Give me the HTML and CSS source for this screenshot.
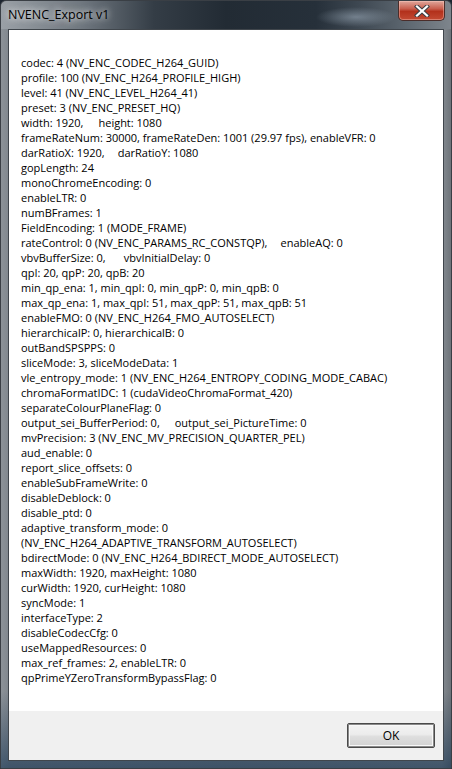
FILE: index.html
```html
<!DOCTYPE html>
<html>

<head>
    <meta charset="utf-8">
    <title>NVENC_Export v1</title>
    <link rel="stylesheet" href="styles.css">
</head>

<body>
    <div class="window">
        <div class="titlebar">
            <span class="title">NVENC_Export v1</span>
            <div class="close">
                <svg width="20" height="12" viewBox="0 0 20 12">
                    <path d="M5 1.5 L15 10.5 M15 1.5 L5 10.5" stroke="#3b3f44" stroke-width="4.2" stroke-linecap="square" />
                    <path d="M5 1.5 L15 10.5 M15 1.5 L5 10.5" stroke="#ffffff" stroke-width="2.2" stroke-linecap="square" />
                </svg>
            </div>
        </div>
        <div class="client">
            <div class="info">
<div>codec: 4 (NV_ENC_CODEC_H264_GUID)</div>
<div>profile: 100 (NV_ENC_H264_PROFILE_HIGH)</div>
<div>level: 41 (NV_ENC_LEVEL_H264_41)</div>
<div>preset: 3 (NV_ENC_PRESET_HQ)</div>
<div>width: 1920,<span class="tab t1"></span>height: 1080</div>
<div>frameRateNum: 30000, frameRateDen: 1001 (29.97 fps), enableVFR: 0</div>
<div>darRatioX: 1920,<span class="tab t2"></span>darRatioY: 1080</div>
<div>gopLength: 24</div>
<div>monoChromeEncoding: 0</div>
<div>enableLTR: 0</div>
<div>numBFrames: 1</div>
<div>FieldEncoding: 1 (MODE_FRAME)</div>
<div>rateControl: 0 (NV_ENC_PARAMS_RC_CONSTQP),<span class="tab t2"></span>enableAQ: 0</div>
<div>vbvBufferSize: 0,<span class="tab t3"></span>vbvInitialDelay: 0</div>
<div>qpI: 20, qpP: 20, qpB: 20</div>
<div>min_qp_ena: 1, min_qpI: 0, min_qpP: 0, min_qpB: 0</div>
<div>max_qp_ena: 1, max_qpI: 51, max_qpP: 51, max_qpB: 51</div>
<div>enableFMO: 0 (NV_ENC_H264_FMO_AUTOSELECT)</div>
<div>hierarchicalP: 0, hierarchicalB: 0</div>
<div>outBandSPSPPS: 0</div>
<div>sliceMode: 3, sliceModeData: 1</div>
<div>vle_entropy_mode: 1 (NV_ENC_H264_ENTROPY_CODING_MODE_CABAC)</div>
<div>chromaFormatIDC: 1 (cudaVideoChromaFormat_420)</div>
<div>separateColourPlaneFlag: 0</div>
<div>output_sei_BufferPeriod: 0,<span class="tab t1"></span>output_sei_PictureTime: 0</div>
<div>mvPrecision: 3 (NV_ENC_MV_PRECISION_QUARTER_PEL)</div>
<div>aud_enable: 0</div>
<div>report_slice_offsets: 0</div>
<div>enableSubFrameWrite: 0</div>
<div>disableDeblock: 0</div>
<div>disable_ptd: 0</div>
<div>adaptive_transform_mode: 0</div>
<div>(NV_ENC_H264_ADAPTIVE_TRANSFORM_AUTOSELECT)</div>
<div>bdirectMode: 0 (NV_ENC_H264_BDIRECT_MODE_AUTOSELECT)</div>
<div>maxWidth: 1920, maxHeight: 1080</div>
<div>curWidth: 1920, curHeight: 1080</div>
<div>syncMode: 1</div>
<div>interfaceType: 2</div>
<div>disableCodecCfg: 0</div>
<div>useMappedResources: 0</div>
<div>max_ref_frames: 2, enableLTR: 0</div>
<div>qpPrimeYZeroTransformBypassFlag: 0</div>
            </div>
            <div class="footer">
                <button class="ok">OK</button>
            </div>
        </div>
    </div>
</body>

</html>
```

FILE: styles.css
```css
html,
body {
    margin: 0;
    padding: 0;
    background: #1c2530;
}

body {
    font-family: "Open Sans", "Noto Sans", "DejaVu Sans", sans-serif;
    font-size: 11px;
    color: #000000;
}

.window {
    width: 452px;
    height: 769px;
    box-sizing: border-box;
    display: flex;
    flex-direction: column;
    padding: 0 7px 7px 7px;
    border: 1px solid #3a3f45;
    border-radius: 6px 6px 0 0;
    background:
        linear-gradient(180deg, rgba(255, 255, 255, 0) 0, rgba(255, 255, 255, 0) 90%, rgba(20, 50, 80, 0.6) 100%),
        linear-gradient(90deg, #8c9298 0, #7f868d 2%, #7b8288 50%, #858b91 98%, #6e747a 100%);
}

.titlebar {
    height: 28px;
    margin: 0 -7px;
    padding: 0 7px;
    display: flex;
    align-items: flex-start;
    justify-content: space-between;
    border-radius: 6px 6px 0 0;
    background:
        radial-gradient(ellipse 40px 10px at 355px 16px, rgba(160, 175, 190, 0.55), rgba(160, 175, 190, 0) 100%),
        linear-gradient(90deg, #9aa0a6 0, #6f777f 18%, #343d46 34%, #222b34 50%, #26303a 70%, #3f4953 80%, #5d6770 90%, #7e858c 100%);
}

.title {
    margin-top: 6px;
    font-family: "Open Sans", "Noto Sans", sans-serif;
    font-size: 12.5px;
    line-height: 16px;
    color: #000000;
    text-shadow: 0 0 6px rgba(255, 255, 255, 0.9), 0 0 10px rgba(255, 255, 255, 0.6);
}

.close {
    width: 47px;
    height: 20px;
    margin-right: -1px;
    box-sizing: border-box;
    display: flex;
    align-items: center;
    justify-content: center;
    border: 1px solid #4a2d2a;
    border-top: none;
    border-radius: 0 0 5px 5px;
    background: linear-gradient(180deg, #e0a79c 0, #c9604f 40%, #b3311c 55%, #c34a33 100%);
    box-shadow: inset 0 0 0 1px rgba(255, 210, 200, 0.4);
}

.close svg {
    display: block;
}

.client {
    flex: 1;
    display: flex;
    flex-direction: column;
    border: 1px solid #40464c;
    background: #f0f0f0;
}

.info {
    flex: 1;
    background: #ffffff;
    padding: 25px 0 0 12px;
    line-height: 15px;
    white-space: nowrap;
}

.tab {
    display: inline-block;
}

.t1 {
    width: 15px;
}

.t2 {
    width: 13px;
}

.t3 {
    width: 18px;
}

.footer {
    height: 49px;
    display: flex;
    align-items: flex-start;
    justify-content: flex-end;
    padding: 12px 8px 0 0;
    box-sizing: border-box;
}

.ok {
    width: 88px;
    height: 25px;
    margin: 0;
    padding: 0;
    font-family: "Open Sans", "Noto Sans", sans-serif;
    font-size: 12px;
    color: #000000;
    border: 1px solid #4a4a4a;
    border-radius: 2px;
    background: linear-gradient(180deg, #f4f4f4 0, #ececec 45%, #dedede 55%, #d2d2d2 100%);
    box-shadow: inset 0 0 0 1px #8a8a8a, inset 0 0 0 2px #f8f8f8;
}
```
